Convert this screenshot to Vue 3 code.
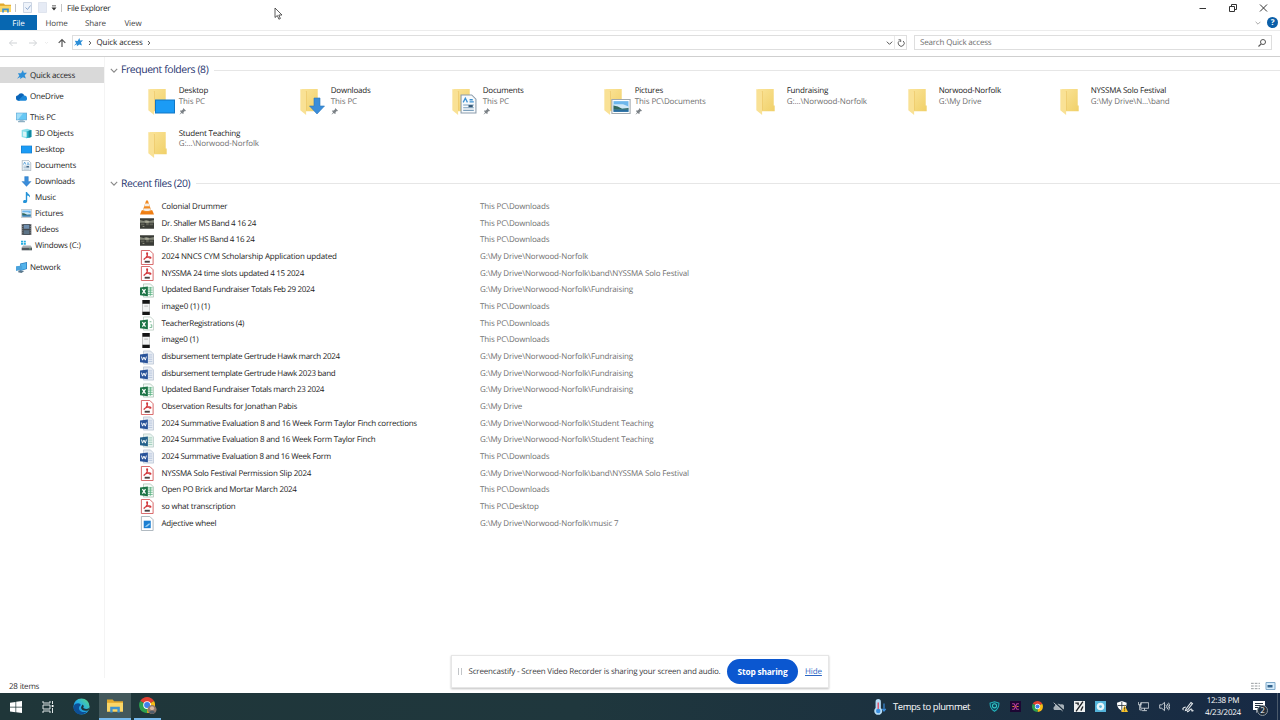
<!-- eslint-disable vue/multi-word-component-names -->

<script setup>
import { ref } from 'vue';

const tabs = ['Home', 'Share', 'View'];
const selecionado = ref('Quick access');

const grupos = [
  [{ nome: 'Quick access', icone: 'star' }],
  [{ nome: 'OneDrive', icone: 'onedrive' }],
  [
    { nome: 'This PC', icone: 'pc' },
    { nome: '3D Objects', icone: 'cube', filho: true },
    { nome: 'Desktop', icone: 'desktop', filho: true },
    { nome: 'Documents', icone: 'document', filho: true },
    { nome: 'Downloads', icone: 'download', filho: true },
    { nome: 'Music', icone: 'music', filho: true },
    { nome: 'Pictures', icone: 'picture', filho: true },
    { nome: 'Videos', icone: 'video', filho: true },
    { nome: 'Windows (C:)', icone: 'drive', filho: true },
  ],
  [{ nome: 'Network', icone: 'network' }],
];

const pastas = [
  { nome: 'Desktop', local: 'This PC', marca: 'desktop', fixo: true },
  { nome: 'Downloads', local: 'This PC', marca: 'download', fixo: true },
  { nome: 'Documents', local: 'This PC', marca: 'document', fixo: true },
  { nome: 'Pictures', local: 'This PC\\Documents', marca: 'picture', fixo: true },
  { nome: 'Fundraising', local: 'G:...\\Norwood-Norfolk' },
  { nome: 'Norwood-Norfolk', local: 'G:\\My Drive' },
  { nome: 'NYSSMA Solo Festival', local: 'G:\\My Drive\\N...\\band' },
  { nome: 'Student Teaching', local: 'G:...\\Norwood-Norfolk' },
];

const DL = 'This PC\\Downloads';
const NN = 'G:\\My Drive\\Norwood-Norfolk';

// esp: letter spacing of the name, in px
const arquivos = [
  { nome: 'Colonial Drummer', tipo: 'vlc', local: DL, esp: -0.18 },
  { nome: 'Dr. Shaller MS Band 4 16 24', tipo: 'photo', local: DL, esp: -0.32 },
  { nome: 'Dr. Shaller HS Band 4 16 24', tipo: 'photo', local: DL, esp: -0.32 },
  { nome: '2024 NNCS CYM Scholarship Application updated', tipo: 'pdf', local: NN, esp: -0.18 },
  { nome: 'NYSSMA 24 time slots updated 4 15 2024', tipo: 'pdf', local: NN + '\\band\\NYSSMA Solo Festival', esp: -0.27 },
  { nome: 'Updated Band Fundraiser Totals Feb 29 2024', tipo: 'excel', local: NN + '\\Fundraising', esp: -0.35 },
  { nome: 'image0 (1) (1)', tipo: 'phone', local: DL, esp: -0.1 },
  { nome: 'TeacherRegistrations (4)', tipo: 'csv', local: DL, esp: -0.3 },
  { nome: 'image0 (1)', tipo: 'phone', local: DL, esp: -0.17 },
  { nome: 'disbursement template Gertrude Hawk march 2024', tipo: 'word', local: NN + '\\Fundraising', esp: -0.31 },
  { nome: 'disbursement template Gertrude Hawk 2023 band', tipo: 'word', local: NN + '\\Fundraising', esp: -0.31 },
  { nome: 'Updated Band Fundraiser Totals march 23 2024', tipo: 'excel', local: NN + '\\Fundraising', esp: -0.35 },
  { nome: 'Observation Results for Jonathan Pabis', tipo: 'pdf', local: 'G:\\My Drive', esp: -0.25 },
  { nome: '2024 Summative Evaluation 8 and 16 Week Form Taylor Finch corrections', tipo: 'word', local: NN + '\\Student Teaching', esp: -0.25 },
  { nome: '2024 Summative Evaluation 8 and 16 Week Form Taylor Finch', tipo: 'word2', local: NN + '\\Student Teaching', esp: -0.26 },
  { nome: '2024 Summative Evaluation 8 and 16 Week Form', tipo: 'word', local: DL, esp: -0.28 },
  { nome: 'NYSSMA Solo Festival Permission Slip 2024', tipo: 'pdf', local: NN + '\\band\\NYSSMA Solo Festival', esp: -0.22 },
  { nome: 'Open PO Brick and Mortar March 2024', tipo: 'excel', local: DL, esp: -0.27 },
  { nome: 'so what transcription', tipo: 'pdf', local: 'This PC\\Desktop', esp: -0.24 },
  { nome: 'Adjective wheel', tipo: 'image', local: NN + '\\music 7', esp: -0.2 },
];

const bandeja = ['shield', 'grid', 'chrome', 'cloudoff', 'pen', 'disc', 'defender', 'net', 'sound'];
const compartilhando = ref(true);
</script>

<template>
  <!-- icon sprite -->
  <svg class="sprite" width="0" height="0">
    <defs>
      <linearGradient id="gFolder" x1="0" x2="1" y1="0" y2="1">
        <stop offset="0" stop-color="#fbe49a" />
        <stop offset="1" stop-color="#f0d068" />
      </linearGradient>
      <linearGradient id="gEdge" x1="0" x2="1" y1="1" y2="0">
        <stop offset="0" stop-color="#0f6fc4" />
        <stop offset=".5" stop-color="#25aee6" />
        <stop offset="1" stop-color="#5fdc78" />
      </linearGradient>
    </defs>
    <symbol id="star" viewBox="0 0 16 16">
      <path fill="#2d8fd8" d="M9.500 0l1.300 4.500 5.200-.3-3.700 4 1.900 5.300-4.700-2L5 14.500l.3-3.300L0 13.800l3.700-4.600L1.500 5l5 .2z" />
    </symbol>
    <symbol id="onedrive" viewBox="0 0 16 16">
      <path fill="#0a64b8" d="M0 11a4 4 0 0 1 3-5 5 5 0 0 1 9 0L5 14H3a3 3 0 0 1-3-3z" />
      <path fill="#1b87d8" d="M3 14l7-7a4 4 0 0 1 6 3c.5 2-.6 4-2 4z" />
    </symbol>
    <symbol id="pc" viewBox="0 0 16 16">
      <path fill="#6aa9d2" d="M0 1h16v11H0z" />
      <path fill="#67c8f5" d="M1 2h14v9H1z" />
      <path fill="#a3def8" d="M1 2h9L3 11H1z" />
      <path fill="#8dafc2" d="M5 12h6v1h2v2H3v-2h2z" />
    </symbol>
    <symbol id="cube" viewBox="0 0 16 16">
      <path fill="#8be0ea" d="M1 3l8-2 6 2v10l-7 2-7-2z" />
      <path fill="#29b4c8" d="M8 5l7-2v10l-7 2z" />
      <path fill="#d9f5f7" d="M3 5l5 1v7l-5-1z" />
      <path fill="#13879f" d="M11 4l4-1v10l-4 1z" />
    </symbol>
    <symbol id="desktop" viewBox="0 0 20 14">
      <path fill="#1177c5" d="M0 0h20v14H0z" />
      <path fill="#1b9bf5" d="M1 1h18v12H1z" />
    </symbol>
    <symbol id="document" viewBox="0 0 16 18">
      <path fill="#f7fafc" stroke="#8b9cab" d="M1 .5h10l4 4v13H1z" />
      <path stroke="#3d91d2" stroke-width="1.200" d="M3 7.500l2-4 2 4M9 5h3M9 7h4" fill="none" />
      <path stroke="#7ba0bd" d="M3 10h10M3 12.500h10M3 15h10" />
      <path fill="#345775" d="M8 10h4v2H8z" />
    </symbol>
    <symbol id="download" viewBox="0 0 16 18">
      <path fill="#3a8dda" stroke="#2875bb" stroke-width=".6" d="M5 1h6v8h4.500L8 17 .5 9H5z" />
    </symbol>
    <symbol id="music" viewBox="0 0 16 16">
      <path fill="#2493d8" d="M7 0h2c0 3 5 3 4 8-1-2-2-3-4-3v8c0 4-6 4-6 1 0-2 2-3 4-2z" />
    </symbol>
    <symbol id="picture" viewBox="0 0 18 14">
      <path fill="#fff" stroke="#a0a9af" d="M.5.5h17v13H.5z" />
      <path fill="#6db7ec" d="M2 2h14v10H2z" />
      <path fill="#cfe8f7" d="M2 5h9l5 2v2H2z" />
      <path fill="#33695c" d="M2 6l4 1 4 2 6-.5V10H2z" />
      <path fill="#2a6c9d" d="M2 10h14v2H2z" />
    </symbol>
    <symbol id="video" viewBox="0 0 16 16">
      <path fill="#44494e" d="M1 0h14v16H1z" />
      <path fill="#6f8eae" d="M4 1h8v6H4z" />
      <path fill="#5d7487" d="M4 9h8v6H4z" />
      <path stroke="#aaa" stroke-dasharray="1.500 1.500" d="M2.500 0v16M13.500 0v16" />
    </symbol>
    <symbol id="drive" viewBox="0 0 16 16">
      <path fill="#25aee0" d="M0 1h3v2.500H0zM4 1h3v2.500H4zM0 4.500h3V7H0zM4 4.500h3V7H4z" />
      <path fill="#aab1b5" d="M3 8h11l2 3H1z" />
      <path fill="#51585d" d="M1 11h15v4H1z" />
      <path fill="#7de08b" d="M12 12.500h2v1h-2z" />
    </symbol>
    <symbol id="network" viewBox="0 0 16 16">
      <path fill="#2c7dbd" d="M6 2l10-2v10l-10 3z" />
      <path fill="#54b4ec" d="M7 3l8-1.500v8L7 12z" />
      <path fill="#4ba3dc" d="M0 6l9-1v6l-9 2z" />
      <path fill="#5b788c" d="M4 12l8 1-4 3-5-1z" />
    </symbol>
    <symbol id="folder" viewBox="0 0 20 30">
      <path fill="url(#gFolder)" d="M1 1h17v17l1 0v6H4z" />
      <path fill="#e8c25e" d="M5.500 3.500L6.500 3v20l-1 .5z" />
      <path fill="#f9e195" d="M0 1l6 3v24l-6-5z" />
    </symbol>
    <symbol id="pin" viewBox="0 0 10 10">
      <path fill="#7c8287" d="M6 0l4 4-1 .5-.7-.2L6.500 6l.1 2-.8.700L4 7 .5 9.500 3 6 1.300 4.200 2 3.500l2 .1L5.800 1.700z" />
    </symbol>
    <symbol id="vlc" viewBox="0 0 16 16">
      <path fill="#ef7d12" d="M2 11h12l2 5H0z" />
      <path fill="#f18a22" d="M7 0h2l4 12c-2 2-8 2-10 0z" />
      <path fill="#f3eee8" d="M6 3.500h4l1 3H5zM4.200 9h7.600l.7 2.200c-2 1.200-7 1.200-9 0z" />
    </symbol>
    <symbol id="photo" viewBox="0 0 16 12">
      <path fill="#3a3c37" d="M0 0h16v12H0z" />
      <path fill="#85887b" d="M0 2l4 1 3-1 4 1 5-1v3H0z" />
      <path fill="#5f6156" d="M1 6h4v2H1zM7 5h3v3H7zM11 6h4v2h-4z" />
      <path fill="#a9a997" d="M6 3h4v2H6zM3 9h2v1H3z" />
    </symbol>
    <symbol id="pdf" viewBox="0 0 14 16">
      <path fill="#fff" stroke="#d55f60" d="M1 .5h9l3.500 3.500v11.500H1z" />
      <path fill="none" stroke="#d2363a" stroke-width="1.100" d="M7 3c-1 0 0 3 1.500 4.500S12 9 11 7.800 5 8 4 9.500 5.500 9 6.800 6.500 7.800 3 7 3z" />
      <path fill="#4a4141" d="M4.500 11.500h5.500v2H4.500z" />
    </symbol>
    <symbol id="excel" viewBox="0 0 16 16">
      <path fill="#f4faf6" stroke="#a3bdae" stroke-width=".8" d="M4 .5h8l3.500 3.500v11.500H4z" />
      <path stroke="#5fb585" d="M9 5h5.500M9 7.500h5.500M9 10h5.500M9 12.500h5.500M11.800 4v10" />
      <path fill="#1d7446" d="M0 4.500l9-1v11l-9-1z" />
      <path stroke="#fff" stroke-width="1.400" d="M2.700 6.500l3.600 5M6.300 6.500l-3.600 5" />
    </symbol>
    <symbol id="csv" viewBox="0 0 16 16">
      <path fill="#fff" stroke="#b0c4b8" stroke-width=".8" d="M4 .5h8l3.500 3.500v11.500H4z" />
      <path fill="none" stroke="#69b288" d="M11 6h2M12 9.500h1.500v3H11" />
      <path fill="#1d7446" d="M0 4.500l9-1v11l-9-1z" />
      <path stroke="#fff" stroke-width="1.400" d="M2.700 6.500l3.600 5M6.300 6.500l-3.600 5" />
    </symbol>
    <symbol id="word" viewBox="0 0 16 16">
      <path fill="#e6ebf2" stroke="#b3bfce" stroke-width=".8" d="M4 .5h8l3.500 3.500v11.500H4z" />
      <path stroke="#b4c4db" d="M9.500 5H14M9.500 7.500H14M9.500 10H14M9.500 12.500H14" />
      <path fill="#29539a" d="M0 4.500l9-1v11l-9-1z" />
      <path fill="none" stroke="#fff" stroke-width="1.100" d="M1.700 7l1.200 4 1.600-3.500 1.600 3.500 1.200-4" />
    </symbol>
    <symbol id="word2" viewBox="0 0 16 16">
      <path fill="#e8f3ef" stroke="#b0c6c2" stroke-width=".8" d="M4 .5h8l3.500 3.500v11.500H4z" />
      <path stroke="#97c9b5" d="M9.500 5H14M9.500 7.500H14M9.500 10H14M9.500 12.500H14" />
      <path fill="#22608a" d="M0 4.500l9-1v11l-9-1z" />
      <path fill="none" stroke="#fff" stroke-width="1.100" d="M1.700 7l1.200 4 1.600-3.500 1.600 3.500 1.200-4" />
    </symbol>
    <symbol id="phone" viewBox="0 0 10 16">
      <path fill="#151515" d="M0 0h8v16H0z" />
      <path fill="#f2f3f3" d="M0 4h8v8.500H0z" />
      <path stroke="#b8b8b8" d="M2 6.500h4" />
    </symbol>
    <symbol id="image" viewBox="0 0 14 16">
      <path fill="#fff" stroke="#a9b3bb" d="M1 .5h9l3.500 3.500v11.500H1z" />
      <path fill="#1c7fd2" d="M3.500 5h7.500v8H3.500z" />
      <path fill="#9bd3f6" d="M4.500 11.500l5-4 .5 1.500-3 2.500z" />
    </symbol>
    <symbol id="chrome" viewBox="0 0 20 20">
      <path fill="#e34133" d="M10 10L1.400 5A10 10 0 0 1 18.600 5z" />
      <path fill="#f8bd15" d="M10 10l8.600-5A10 10 0 0 1 10 20z" />
      <path fill="#2da04e" d="M10 10v10A10 10 0 0 1 1.400 5z" />
      <circle cx="10" cy="10" r="4.800" fill="#fff" />
      <circle cx="10" cy="10" r="3.700" fill="#3f81ea" />
    </symbol>
    <symbol id="shield" viewBox="0 0 16 16">
      <path fill="#0c4159" stroke="#25b5bd" stroke-width="1.500" d="M8 1l6.500 2c0 6-1 9-6.500 12C2.500 12 1.500 9 1.500 3z" />
      <circle cx="8" cy="7" r="3" fill="none" stroke="#38c6c4" stroke-width="1.500" />
    </symbol>
    <symbol id="grid" viewBox="0 0 16 16">
      <path fill="#1c0733" d="M0 0h16v16H0z" />
      <path fill="none" stroke="#b23a98" stroke-width="1.600" d="M3 4h3l2 4-2 4H3M13 4h-3L8 8l2 4h3" />
      <path stroke="#e87a36" stroke-width="1.600" d="M3.500 8h3M9.500 8h3" />
    </symbol>
    <symbol id="cloudoff" viewBox="0 0 16 16">
      <path fill="#a7b1b9" d="M2 13a3 3 0 0 1 0-5 6 6 0 0 1 9-3 4 4 0 0 1 3 8z" />
      <path stroke="#1b2e3e" stroke-width="2.200" d="M2 1.500l13 12" />
      <path stroke="#c5ccd2" stroke-width="1.300" d="M1 2.500l13 12" />
    </symbol>
    <symbol id="pen" viewBox="0 0 16 16">
      <path fill="#eef0f1" d="M0 0h16v16H0z" />
      <path stroke="#1c2025" stroke-width="2" fill="none" d="M3 15L13 1M2 3h4v3M10 14l3-6" />
    </symbol>
    <symbol id="disc" viewBox="0 0 16 16">
      <path fill="#54b4da" d="M0 0h16v16H0z" />
      <circle cx="8" cy="8" r="5.500" fill="#e8f6fb" />
      <circle cx="8" cy="8" r="2" fill="#58b5da" />
    </symbol>
    <symbol id="defender" viewBox="0 0 16 16">
      <path fill="#fff" d="M7 0l7 2.500c0 6-2 9-7 11.500C2 11.500 0 8.500 0 2.500z" />
      <path stroke="#23303d" stroke-width="1.200" d="M7 1v12M1 6.500h12" />
      <path fill="#f8c22b" d="M11 6l5 10H6z" />
      <path stroke="#332" stroke-width="1.200" d="M11 9v3.500M11 13.500v1.300" />
    </symbol>
    <symbol id="net" viewBox="0 0 16 16">
      <path fill="none" stroke="#dfe4e8" stroke-width="1.200" d="M4 2.500h11.500v8H4zM9.500 10.500v3M6 14h7M.5 1.500v4h4v-3M2.500 5.500V13H6" />
    </symbol>
    <symbol id="sound" viewBox="0 0 16 16">
      <path fill="none" stroke="#dfe4e8" stroke-width="1.200" d="M1 5.500h3l4-3.500v12l-4-3.500H1zM10 5.500q2 2.500 0 5M12 4q3 4 0 8M14 2.500q3.500 5.500 0 11" />
    </symbol>
    <symbol id="explorer" viewBox="0 0 20 16">
      <path fill="#e2a92c" d="M0 0h7l2 2h11v13H0z" />
      <path fill="#fad667" d="M0 4h20v11H0z" />
      <path fill="#3f93cf" d="M4 16V9h12v7h-3v-4H7v4z" />
    </symbol>
    <symbol id="chevron" viewBox="0 0 10 6">
      <path fill="none" stroke="currentColor" stroke-width="1.400" d="M1 1l4 4 4-4" />
    </symbol>
  </svg>

  <div class="janela">
    <header class="titulo">
      <svg class="app"><use href="#explorer" /></svg>
      <i class="sep"></i>
      <svg class="qa" viewBox="0 0 9 11"><path fill="#eef3fa" stroke="#ccd5e3" d="M.5.5h8v10h-8z" /><path fill="none" stroke="#8fa9cd" d="M2.500 5.500l2 2 3-4" /></svg>
      <svg class="qa dois" viewBox="0 0 9 11"><path fill="#e6ebf5" stroke="#dfe4ee" d="M.5.5h8v10h-8z" /></svg>
      <svg class="seta" viewBox="0 0 6 6"><path fill="#333" d="M1 .500h4v.8H1zM.5 2.500h5L3 5.500z" /></svg>
      <i class="sep"></i>
      <span class="nome">File Explorer</span>
      <div class="controles">
        <svg viewBox="0 0 10 10"><path stroke="#333" d="M1.500 5.500h6.500" /></svg>
        <svg viewBox="0 0 10 10"><path fill="none" stroke="#333" d="M1.500 3.500h5v5h-5zM3.500 3.500v-2h5v5h-2" /></svg>
        <svg viewBox="0 0 10 10"><path stroke="#333" d="M2 1.500l7 7M9 1.500l-7 7" /></svg>
      </div>
    </header>

    <nav class="abas">
      <span class="arquivo">File</span>
      <span v-for="tab in tabs" :key="tab" class="aba">{{ tab }}</span>
      <svg class="expandir"><use href="#chevron" /></svg>
      <span class="ajuda">?</span>
    </nav>

    <div class="barra">
      <svg class="setas" viewBox="0 0 72 16">
        <g fill="none" stroke="#d0d3d6">
          <path d="M17 8H9.500M12.500 5l-3 3 3 3M29 8h7.500M33.500 5l3 3-3 3" />
          <path d="M45 7l1.500 1.500L48 7" stroke="#ececec" />
          <path stroke="#555" stroke-width="1.200" d="M62 12V4.500M58.700 7.800L62 4.500l3.300 3.300" />
        </g>
      </svg>
      <div class="endereco">
        <svg class="estrela"><use href="#star" /></svg>
        <svg class="div" viewBox="0 0 4 6"><path fill="none" stroke="#555" d="M1 1L2.800 3 1 5" /></svg>
        <span>Quick access</span>
        <svg class="div" viewBox="0 0 4 6"><path fill="none" stroke="#555" d="M1 1L2.800 3 1 5" /></svg>
        <svg class="abrir"><use href="#chevron" /></svg>
        <div class="recarregar">
          <svg viewBox="0 0 10 10"><path fill="none" stroke="#666" d="M7.200 3A3 3 0 1 1 3.500 2.800M2.500 1.800h2.200V4" /></svg>
        </div>
      </div>
      <div class="busca">
        <span>Search Quick access</span>
        <svg viewBox="0 0 10 10"><circle cx="6" cy="4" r="2.500" fill="none" stroke="#555" /><path stroke="#555" stroke-width="1.200" d="M4.200 5.800L1.500 8.500" /></svg>
      </div>
    </div>

    <div class="corpo">
      <aside class="lateral">
        <ul v-for="(grupo, i) in grupos" :key="i">
          <li
            v-for="item in grupo"
            :key="item.nome"
            :class="{ ativo: item.nome === selecionado, filho: item.filho }"
            @click="selecionado = item.nome"
          >
            <svg><use :href="'#' + item.icone" /></svg>
            <span>{{ item.nome }}</span>
          </li>
        </ul>
      </aside>

      <main>
        <h2 class="secao">
          <svg><use href="#chevron" /></svg>
          <span>Frequent folders (8)</span>
        </h2>
        <div class="pastas">
          <div v-for="pasta in pastas" :key="pasta.nome" class="pasta">
            <div class="icone">
              <svg class="base"><use href="#folder" /></svg>
              <svg v-if="pasta.marca" :class="['marca', pasta.marca]"><use :href="'#' + pasta.marca" /></svg>
            </div>
            <div class="info">
              <p>{{ pasta.nome }}</p>
              <p class="local">{{ pasta.local }}</p>
              <svg v-if="pasta.fixo"><use href="#pin" /></svg>
            </div>
          </div>
        </div>

        <h2 class="secao">
          <svg><use href="#chevron" /></svg>
          <span>Recent files (20)</span>
        </h2>
        <div class="arquivos">
          <div v-for="arq in arquivos" :key="arq.nome" class="linha">
            <svg><use :href="'#' + arq.tipo" /></svg>
            <span class="arq" :style="{ letterSpacing: arq.esp + 'px' }">{{ arq.nome }}</span>
            <span class="caminho">{{ arq.local }}</span>
          </div>
        </div>
      </main>
    </div>

    <footer class="status">
      <span>28 items</span>
      <div class="modos">
        <svg viewBox="0 0 12 9"><path stroke="#8a8f93" stroke-dasharray="3 1.200" d="M1 1.500h10M1 4.500h10M1 7.500h10" /></svg>
        <svg viewBox="0 0 10 8"><path fill="#d6ecfb" stroke="#7fa9c9" d="M.5.500h9v7h-9z" /><path fill="#33648e" d="M2 3h5v2.500H2z" /></svg>
      </div>
    </footer>

    <div class="tarefas">
      <div class="botao inicio">
        <svg viewBox="0 0 12 12"><path fill="#fff" d="M0 1.700l5.500-.8v4.800H0zM6.200.8L12 0v5.700H6.200zM0 6.400h5.500v4.800L0 10.400zM6.200 6.400H12V12l-5.800-.8z" /></svg>
      </div>
      <div class="botao visao">
        <svg viewBox="0 0 12 12"><path fill="none" stroke="#dfe5e6" d="M1 0v2h7V0M1 12v-2h7v2M1 4h7v4H1zM10.500 0v3M10.500 7v5" /><path fill="#fff" d="M9.700 4h1.800v2H9.700z" /></svg>
      </div>
      <div class="botao edge">
        <svg viewBox="0 0 20 20">
          <circle cx="10" cy="10" r="9.500" fill="url(#gEdge)" />
          <path fill="#0d4f96" d="M1 9c3-4 8-3 8-.5-3 2-3 6.500 2 8 3 .5 5-1 6-1-3 4-9 5-13 2C1 15 0 12 1 9z" />
          <path fill="#1f3439" d="M11 7.500c2 1 2 2.500 1 4 1.500 1.800 5 1.700 7 .2l-.5 2.300c-3 2-9 1-9-2.500C9.500 9.500 11 9 11 7.500z" />
        </svg>
      </div>
      <div class="botao aberto explorador"><svg><use href="#explorer" /></svg></div>
      <div class="botao aberto navegador">
        <svg viewBox="0 0 20 20">
          <use href="#chrome" width="18" height="18" />
          <circle cx="14.500" cy="14" r="5" fill="#90796d" />
          <circle cx="14.500" cy="12.500" r="2.300" fill="#dcb9a2" />
          <path fill="#505e6c" d="M11 17q3.500-4 7 0l-3.500 2z" />
        </svg>
      </div>

      <div class="clima">
        <svg viewBox="0 0 14 18">
          <path fill="#b6dcf6" d="M2 3a3 3 0 0 1 6 0v7a4.500 4.500 0 1 1-6 0z" />
          <path stroke="#e0506c" stroke-width="1.600" d="M5 4v9" />
          <circle cx="5" cy="13.500" r="2.500" fill="#3b8fe0" />
          <path fill="none" stroke="#3b8fe0" stroke-width="1.300" d="M11.500 5v8M9.500 11l2 2.500 2-2.500" />
        </svg>
        <span>Temps to plummet</span>
      </div>
      <div class="bandeja">
        <svg v-for="b in bandeja" :key="b"><use :href="'#' + b" /></svg>
      </div>
      <svg class="tinta" viewBox="0 0 12 12"><path fill="none" stroke="#e5e9ec" stroke-width="1.100" d="M4 8l5-6.500 1.500 1.200L5.500 9 3.500 9.500zM3.800 6C1 6.500 0 8 1.500 9M5 10.500c2 1 3-3 4.500-2.500S8 11 11.500 9.500" /></svg>
      <div class="relogio">
        <span>12:38 PM</span>
        <span>4/23/2024</span>
      </div>
      <div class="avisos">
        <svg viewBox="0 0 12 12"><path fill="#fff" d="M0 0h12v9H6l-2.500 3V9H0z" /><path stroke="#22303f" d="M2 2.500h8M2 4.500h8M2 6.500h5" /></svg>
        <span class="contador">2</span>
      </div>
      <i class="fim"></i>
    </div>

    <div v-if="compartilhando" class="aviso">
      <i class="alca"></i>
      <span class="texto">Screencastify - Screen Video Recorder is sharing your screen and audio.</span>
      <button>Stop sharing</button>
      <a @click="compartilhando = false">Hide</a>
    </div>

    <svg class="cursor" viewBox="0 0 9 13">
      <path fill="#fff" stroke="#333" stroke-width=".8" d="M1 1v9.500l2.300-2 1.600 3.700 1.500-.7-1.600-3.500H8z" />
    </svg>
  </div>
</template>

<style>
body {
  margin: 0;
  overflow: hidden;
}
</style>

<style scoped>
.sprite {
  position: absolute;
}

.janela {
  position: relative;
  display: flex;
  flex-direction: column;
  width: 1280px;
  height: 720px;
  background-color: #fff;
  color: #1c1c1c;
  font-family: "Open Sans", "Noto Sans", sans-serif;
  font-size: 8px;
  line-height: 10px;
  letter-spacing: -0.1px;
  text-rendering: geometricPrecision;
  white-space: nowrap;
}

svg {
  display: block;
  flex: none;
}

p, h2, ul {
  margin: 0;
  padding: 0;
  font-weight: normal;
  list-style: none;
}

.titulo {
  display: flex;
  align-items: center;
  height: 15px;
}

.app {
  width: 11px;
  height: 10px;
}

.sep {
  width: 1px;
  height: 8px;
  margin: 0 7px 0 4px;
  background-color: #c4c4c4;
}

.qa {
  width: 9px;
  height: 11px;
}

.qa.dois {
  margin-left: 6px;
}

.seta {
  width: 6px;
  height: 6px;
  margin-left: 4px;
}

.seta + .sep {
  margin: 0 5px 0 4px;
}

.titulo .nome {
  padding-top: 2px;
  font-size: 8.2px;
  letter-spacing: -0.3px;
}

.controles {
  display: flex;
  gap: 20px;
  margin-left: auto;
  padding-right: 12px;
}

.controles svg {
  width: 10px;
  height: 10px;
}

.abas {
  display: flex;
  align-items: center;
  box-sizing: border-box;
  height: 16px;
  border-bottom: 1px solid #ececec;
}

.arquivo,
.aba {
  height: 15px;
  line-height: 17px;
  text-align: center;
}

.arquivo {
  width: 37px;
  background-color: #0767b1;
  color: #fff;
}

.aba {
  width: 39px;
  color: #444;
}

.aba:nth-child(4) {
  width: 36px;
}

.expandir {
  width: 6px;
  height: 4px;
  margin-left: auto;
  color: #999;
}

.ajuda {
  width: 11px;
  height: 11px;
  margin: 0 2px 0 6px;
  border-radius: 50%;
  background-color: #0b5fa8;
  color: #fff;
  font-weight: bold;
  line-height: 11px;
  text-align: center;
}

.barra {
  display: flex;
  align-items: center;
  box-sizing: border-box;
  height: 26px;
  padding-bottom: 2px;
  border-bottom: 1px solid #cfcfcf;
}

.setas {
  width: 72px;
  height: 16px;
}

.endereco,
.busca {
  display: flex;
  align-items: center;
  box-sizing: border-box;
  height: 15px;
  border: 1px solid #dedede;
}

.endereco {
  width: 835px;
  padding-left: 1px;
}

.endereco span {
  padding-top: 1px;
}

.estrela {
  width: 9px;
  height: 9px;
}

.div {
  width: 4px;
  height: 6px;
  margin: 0 5px 0 4.500px;
}

.abrir {
  width: 7px;
  height: 4px;
  margin-left: auto;
  margin-right: 1.500px;
  color: #444;
}

.recarregar {
  padding: 2px 0 2px 1px;
  border-left: 1px solid #e8e8e8;
}

.recarregar svg,
.busca svg {
  width: 10px;
  height: 10px;
}

.busca {
  justify-content: space-between;
  width: 358px;
  margin-left: 7px;
  padding: 0 4px 0 5px;
  color: #6d6d6d;
  letter-spacing: -0.18px;
}

.corpo {
  display: flex;
  flex: 1;
}

.lateral {
  box-sizing: border-box;
  width: 105px;
  padding-top: 10px;
  border-right: 1px solid #f4f4f4;
  letter-spacing: -0.2px;
}

.lateral ul {
  margin-bottom: 5.4px;
}

.lateral li {
  display: flex;
  align-items: center;
  gap: 3px;
  height: 16px;
  padding-left: 16px;
}

.lateral li.filho {
  padding-left: 21px;
}

.lateral li.ativo {
  background-color: #d9d9d9;
}

.lateral li span {
  padding-top: 1.200px;
}

.lateral svg {
  width: 11px;
  height: 11px;
}

.lateral .ativo svg {
  width: 10px;
  height: 10px;
  margin-left: 1px;
}

main {
  flex: 1;
  padding: 1px 0 0 5px;
}

.secao {
  display: flex;
  align-items: center;
  gap: 3px;
  height: 14px;
  margin-top: 5px;
  color: #27346f;
  font-size: 10.4px;
  letter-spacing: -0.4px;
}

.secao::after {
  content: '';
  flex: 1;
  height: 1px;
  margin-left: 3px;
  background-color: #e6e6e6;
}

.secao svg {
  width: 8px;
  height: 5px;
  color: #888;
}

.pastas {
  display: grid;
  box-sizing: border-box;
  grid-template-columns: repeat(7, 152px);
  grid-auto-rows: 42.700px;
  padding: 9px 0 0 37px;
  height: 94.500px;
}

.pasta {
  display: flex;
}

.icone {
  position: relative;
  width: 31.700px;
}

.base {
  width: 20px;
  height: 29px;
  margin-top: 2px;
  margin-left: 1px;
}

.marca {
  position: absolute;
  left: 8px;
  top: 13px;
  width: 20px;
  height: 15px;
}

.marca.download {
  left: 9px;
  top: 11px;
  width: 18px;
  height: 18px;
}

.marca.document {
  left: 9px;
  top: 8px;
  width: 17px;
  height: 20px;
}

.info p {
  line-height: 10.500px;
  letter-spacing: -0.2px;
}

.info svg {
  width: 7px;
  height: 7px;
  margin-top: 0.500px;
}

.info .local,
.caminho {
  color: #6f6f6f;
}

.info .local {
  letter-spacing: -0.1px;
}

.caminho {
  letter-spacing: -0.14px;
}

.arquivos {
  padding: 8.300px 0 0 30px;
}

.linha {
  display: flex;
  align-items: center;
  height: 16.660px;
}

.linha svg {
  width: 14px;
  height: 15px;
}

.arq {
  width: 318.500px;
  margin-left: 7.500px;
}

.status {
  display: flex;
  align-items: center;
  justify-content: space-between;
  height: 15px;
  padding: 0 4px 0 9px;
  color: #333;
}

.status span {
  padding-top: 2px;
  letter-spacing: -0.2px;
}

.modos {
  display: flex;
  gap: 4px;
}

.modos svg {
  width: 11px;
  height: 8px;
}

.tarefas {
  display: flex;
  align-items: center;
  height: 27px;
  background: linear-gradient(90deg, #1f3639 0%, #1f373d 45%, #1b3040 75%, #172a45 100%);
  color: #fff;
}

.botao {
  display: flex;
  align-items: center;
  justify-content: center;
  box-sizing: border-box;
  width: 32px;
  height: 27px;
}

.botao svg {
  width: 12px;
  height: 12px;
}

.edge {
  width: 35px;
}

.edge svg {
  width: 17px;
  height: 17px;
}

.aberto {
  border-bottom: 2px solid #76b9ed;
}

.explorador {
  background-color: #43585b;
}

.explorador svg {
  width: 16px;
  height: 14px;
}

.navegador {
  width: 27px;
  margin-left: 3px;
}

.navegador svg {
  width: 18px;
  height: 18px;
}

.clima {
  display: flex;
  align-items: center;
  gap: 6px;
  width: 116px;
  margin-left: auto;
  font-size: 9.400px;
  letter-spacing: -0.37px;
}

.clima svg {
  width: 14px;
  height: 16px;
}

.bandeja {
  display: flex;
  gap: 10.250px;
}

.bandeja svg {
  width: 11px;
  height: 11px;
}

.tinta {
  width: 12px;
  height: 12px;
  margin-left: 12px;
}

.relogio {
  display: flex;
  flex-direction: column;
  width: 38px;
  margin-left: 10px;
  line-height: 12px;
  letter-spacing: -0.22px;
  text-align: center;
}

.relogio span:first-child {
  padding-top: 1px;
}

.avisos {
  position: relative;
  width: 18px;
  margin-left: 11px;
}

.avisos svg {
  width: 12px;
  height: 12px;
}

.contador {
  position: absolute;
  left: 4px;
  top: 4px;
  width: 9px;
  height: 9px;
  border: 1px solid #8b959e;
  border-radius: 50%;
  background-color: #1f2d3b;
  line-height: 9px;
  text-align: center;
}

.fim {
  width: 1px;
  height: 27px;
  margin: 0 2px 0 6px;
  background-color: #4b5a6b;
}

/* screen sharing bar, floats over the window */
.aviso {
  position: absolute;
  left: 451px;
  top: 655px;
  display: flex;
  align-items: center;
  box-sizing: border-box;
  width: 378px;
  height: 33px;
  padding-left: 6px;
  border: 1px solid #e6e6e6;
  background-color: #fff;
  box-shadow: 0 1px 2px rgba(0, 0, 0, 0.25);
  color: #3c4043;
}

.alca {
  width: 2px;
  height: 7px;
  margin-right: 6.500px;
  border: solid #c2c5c8;
  border-width: 0 1px;
}

.texto {
  width: 258.500px;
  letter-spacing: -0.19px;
}

.aviso button {
  width: 71px;
  height: 25px;
  padding: 0;
  border: none;
  border-radius: 13px;
  background-color: #0b57d0;
  color: #fff;
  font: bold 8.400px "Open Sans", sans-serif;
  letter-spacing: -0.2px;
  cursor: pointer;
}

.aviso a {
  margin-left: 7px;
  color: #2b66c4;
  text-decoration: underline;
  cursor: pointer;
}

.cursor {
  position: absolute;
  left: 274px;
  top: 7px;
  width: 9px;
  height: 13px;
}
</style>
